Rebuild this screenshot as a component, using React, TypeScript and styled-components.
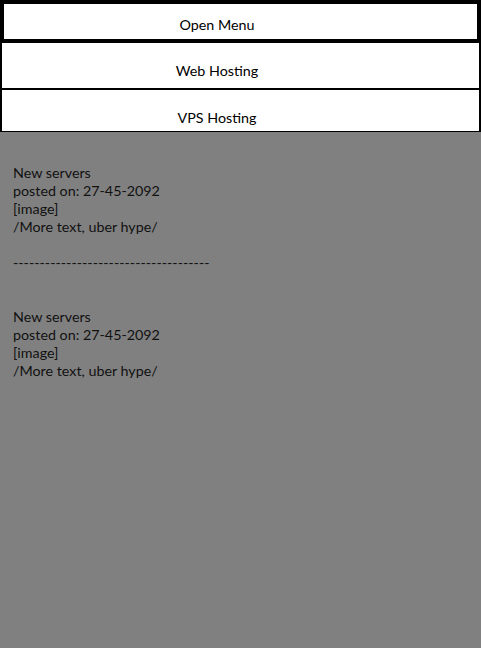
import styled, { createGlobalStyle } from "styled-components";
import React from "react";

const GlobalStyle = createGlobalStyle`
  html, body {
    margin: 0;
    padding: 0;
    background-color: #808080;
    font-family: Lato, "Liberation Sans", sans-serif;
  }
`

const Page = styled.div`
  min-height: 648px;
  background-color: #808080;
`

const Nav = styled.nav`
  height: 132px;
  overflow: hidden;
  background-color: white;
  border-bottom: 1px solid black;
  box-sizing: border-box;
`

const MenuItem = styled.div<{ $open?: boolean }>`
  box-sizing: border-box;
  height: ${p => (p.$open ? "43px" : "47px")};
  padding: ${p => (p.$open ? "12px 47px 0 0" : "19px 47px 0 0")};
  border: ${p => (p.$open ? "4px solid black" : "2px solid black")};
  border-top: ${p => (p.$open ? "4px solid black" : "none")};
  font-size: 14.3px;
  line-height: 18px;
  color: black;
  text-align: center;
  background-color: white;
  cursor: pointer;
`

const News = styled.div`
  padding: 32px 13px 0;
  font-size: 14.3px;
  line-height: 18px;
  color: #111;
`

const Post = styled.p`
  margin: 0;
`

const Spacer = styled.div<{ $lines: number }>`
  height: ${p => p.$lines * 18}px;
`

const posts = [
  { title: "New servers", date: "27-45-2092" },
  { title: "New servers", date: "27-45-2092" },
];

const App = () => {
  return (
    <Page>
      <GlobalStyle />
      <Nav>
        <MenuItem $open>Open Menu</MenuItem>
        <MenuItem>Web Hosting</MenuItem>
        <MenuItem>VPS Hosting</MenuItem>
      </Nav>
      <News>
        {posts.map((post, i) => (
          <React.Fragment key={i}>
            {i > 0 && (
              <>
                <Spacer $lines={1} />
                <Post>-------------------------------------</Post>
                <Spacer $lines={2} />
              </>
            )}
            <Post>
              {post.title}
              <br />
              posted on: {post.date}
              <br />
              [image]
              <br />
              /More text, uber hype/
            </Post>
          </React.Fragment>
        ))}
      </News>
    </Page>
  );
}

export default App;
